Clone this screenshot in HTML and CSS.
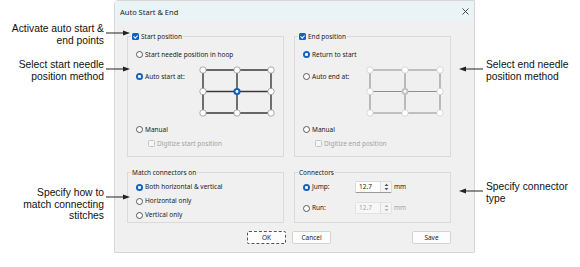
FILE: index.html
```html
<!DOCTYPE html>
<html lang="en">
<head>
    <meta charset="UTF-8">
    <title>Auto Start &amp; End</title>
    <link rel="stylesheet" href="styles.css">
</head>
<body>
<div class="page">

    <!-- Callouts on the left -->
    <div class="notes notes-left">
        <p class="note note-1">Activate auto start &amp;<br>end points<svg class="arrow" width="24" height="6" viewBox="0 0 24 6"><line x1="0" y1="3" x2="19" y2="3"/><polygon points="17,0.5 24,3 17,5.5"/></svg></p>
        <p class="note note-2">Select start needle<br>position method<svg class="arrow" width="24" height="6" viewBox="0 0 24 6"><line x1="0" y1="3" x2="19" y2="3"/><polygon points="17,0.5 24,3 17,5.5"/></svg></p>
        <p class="note note-3">Specify how to<br>match connecting<br>stitches<svg class="arrow" width="24" height="6" viewBox="0 0 24 6"><line x1="0" y1="3" x2="19" y2="3"/><polygon points="17,0.5 24,3 17,5.5"/></svg></p>
    </div>

    <!-- Dialog -->
    <div class="dialog">
        <div class="titlebar">
            <span>Auto Start &amp; End</span>
            <svg class="close" width="7" height="7" viewBox="0 0 7 7"><path d="M0.5 0.5 L6.5 6.5 M6.5 0.5 L0.5 6.5"/></svg>
        </div>
        <div class="body">
            <div class="groups">
                <fieldset class="group group-top">
                    <legend><span class="lg"><span class="check"></span>Start position</span></legend>
                    <div class="opt first"><span class="radio"></span>Start needle position in hoop</div>
                    <div class="opt-grid">
                        <div class="opt grid-label"><span class="radio on"></span>Auto start at:</div>
                        <svg class="pos" width="78" height="51" viewBox="0 0 78 51">
                            <g class="pos-lines">
                                <path d="M4 4 H72 M4 25.5 H72 M4 47 H72 M4 4 V47 M38 4 V47 M72 4 V47"/>
                            </g>
                            <g class="pos-nodes">
                                <circle cx="4" cy="4" r="3.2"/><circle cx="38" cy="4" r="3.2"/><circle cx="72" cy="4" r="3.2"/>
                                <circle cx="4" cy="25.5" r="3.2"/><circle cx="72" cy="25.5" r="3.2"/>
                                <circle cx="4" cy="47" r="3.2"/><circle cx="38" cy="47" r="3.2"/><circle cx="72" cy="47" r="3.2"/>
                            </g>
                            <circle class="pos-sel" cx="38" cy="25.5" r="3.6"/>
                            <circle class="pos-dot" cx="38" cy="25.5" r="1.4"/>
                        </svg>
                    </div>
                    <div class="opt manual"><span class="radio"></span>Manual</div>
                    <div class="opt sub off"><span class="check off"></span>Digitize start position</div>
                </fieldset>

                <fieldset class="group group-top">
                    <legend><span class="lg"><span class="check"></span>End position</span></legend>
                    <div class="opt first"><span class="radio on"></span>Return to start</div>
                    <div class="opt-grid">
                        <div class="opt grid-label"><span class="radio"></span>Auto end at:</div>
                        <svg class="pos pos-off" width="78" height="51" viewBox="0 0 78 51">
                            <g class="pos-lines">
                                <path d="M4 4 H74 M4 25.5 H74 M4 47 H74 M4 4 V47 M39 4 V47 M74 4 V47"/>
                            </g>
                            <g class="pos-nodes">
                                <circle cx="4" cy="4" r="3.2"/><circle cx="39" cy="4" r="3.2"/><circle cx="74" cy="4" r="3.2"/>
                                <circle cx="4" cy="25.5" r="3.2"/><circle cx="74" cy="25.5" r="3.2"/>
                                <circle cx="4" cy="47" r="3.2"/><circle cx="39" cy="47" r="3.2"/><circle cx="74" cy="47" r="3.2"/>
                            </g>
                            <circle class="pos-sel" cx="39" cy="25.5" r="3.4"/>
                            <circle class="pos-dot" cx="39" cy="25.5" r="1.4"/>
                        </svg>
                    </div>
                    <div class="opt manual"><span class="radio"></span>Manual</div>
                    <div class="opt sub off"><span class="check off"></span>Digitize end position</div>
                </fieldset>

                <fieldset class="group group-bottom">
                    <legend><span class="lg">Match connectors on</span></legend>
                    <div class="opt first"><span class="radio on"></span>Both horizontal &amp; vertical</div>
                    <div class="opt"><span class="radio"></span>Horizontal only</div>
                    <div class="opt"><span class="radio"></span>Vertical only</div>
                </fieldset>

                <fieldset class="group group-bottom">
                    <legend><span class="lg">Connectors</span></legend>
                    <div class="opt field first">
                        <span class="field-label"><span class="radio on"></span>Jump:</span>
                        <span class="spin"><span class="spin-val">12.7</span><span class="spin-btn"><svg width="5" height="8" viewBox="0 0 5 8"><path d="M0.5 3 L2.5 0.8 L4.5 3 Z M0.5 5 L2.5 7.2 L4.5 5 Z"/></svg></span></span>
                        <span class="unit">mm</span>
                    </div>
                    <div class="opt field off">
                        <span class="field-label"><span class="radio"></span>Run:</span>
                        <span class="spin"><span class="spin-val">12.7</span><span class="spin-btn"><svg width="5" height="8" viewBox="0 0 5 8"><path d="M0.5 3 L2.5 0.8 L4.5 3 Z M0.5 5 L2.5 7.2 L4.5 5 Z"/></svg></span></span>
                        <span class="unit">mm</span>
                    </div>
                </fieldset>
            </div>

            <!-- Buttons -->
            <div class="buttons">
                <div class="btn-pair">
                    <button class="btn default">OK</button>
                    <button class="btn">Cancel</button>
                </div>
                <button class="btn save">Save</button>
            </div>
        </div>
    </div>

    <!-- Callouts on the right -->
    <div class="notes notes-right">
        <p class="note note-4">Select end needle<br>position method<svg class="arrow" width="24" height="6" viewBox="0 0 24 6"><line x1="5" y1="3" x2="24" y2="3"/><polygon points="7,0.5 0,3 7,5.5"/></svg></p>
        <p class="note note-5">Specify connector<br>type<svg class="arrow" width="24" height="6" viewBox="0 0 24 6"><line x1="5" y1="3" x2="24" y2="3"/><polygon points="7,0.5 0,3 7,5.5"/></svg></p>
    </div>
</div>
</body>
</html>
```

FILE: styles.css
```css
body {
    margin: 0;
    background: #fff;
    font-family: "Noto Sans", sans-serif;
    color: #1b1b1b;
}

.page {
    display: flex;
    align-items: flex-start;
    width: 580px;
    height: 267px;
    overflow: hidden;
}

/* Callouts */
.notes {
    font-family: "Liberation Sans", Arial, sans-serif;
    font-size: 10.3px;
    line-height: 11.5px;
    color: #111;
}

.notes-left {
    width: 114px;
    flex: none;
    box-sizing: border-box;
    padding-right: 10px;
    text-align: right;
}

.notes-right {
    padding-left: 11px;
}

.note {
    position: relative;
    margin: 0;
}

.note .arrow {
    position: absolute;
    top: 7px;
}

.notes-left .arrow {
    left: calc(100% + 2px);
}

.notes-right .arrow {
    right: calc(100% + 3px);
}

.arrow line {
    stroke: #222;
    stroke-width: 1;
}

.arrow polygon {
    fill: #222;
}

.note-1 { margin-top: 23px; }
.note-2 { margin-top: 13px; }
.note-3 { margin-top: 105px; }
.note-4 { margin-top: 59px; }
.note-5 { margin-top: 99px; }

/* Dialog */
.dialog {
    width: 361px;
    height: 253px;
    flex: none;
    box-sizing: border-box;
    background: #f0f0f0;
    border: 1px solid #d6d6d6;
    border-top-left-radius: 4px;
    display: flex;
    flex-direction: column;
    font-size: 6.5px;
}

.titlebar {
    height: 21px;
    flex: none;
    display: flex;
    align-items: center;
    justify-content: space-between;
    padding: 0 5px;
    background: #eaf4f6;
    font-size: 7.5px;
    color: #222;
}

.close path {
    stroke: #333;
    stroke-width: 0.9;
    fill: none;
}

.body {
    flex: 1;
    padding: 10px 23px 0 12px;
    display: flex;
    flex-direction: column;
}

.groups {
    display: grid;
    grid-template-columns: 157px 157px;
    column-gap: 10px;
    row-gap: 11px;
}

/* Group boxes */
.group {
    margin: 0;
    min-width: 0;
    padding: 0 0 7px 8px;
    border: 1px solid #dadada;
}

.group legend {
    margin-left: -5px;
    padding: 0 1px;
    height: 9px;
    line-height: 9px;
}

.lg {
    display: inline-flex;
    align-items: center;
    gap: 2px;
}

.group-bottom {
    padding-bottom: 2px;
}

.opt {
    display: flex;
    align-items: center;
    gap: 2px;
    height: 10px;
    line-height: 10px;
    white-space: nowrap;
}

.group-top .opt.first { margin-top: 8.5px; }
.group-bottom .opt.first { margin-top: 5.5px; }
.group-bottom .opt { margin-top: 4px; }

.opt-grid {
    display: flex;
    align-items: flex-start;
    margin-top: 6px;
}

.grid-label {
    width: 63px;
    margin-top: 6px;
}

.opt.manual { margin-top: 8px; }

.opt.sub {
    margin-top: 4px;
    margin-left: 12px;
}

.off {
    color: #a3a3a3;
}

/* Radio buttons and checkboxes */
.radio {
    width: 7px;
    height: 7px;
    flex: none;
    box-sizing: border-box;
    border-radius: 50%;
    border: 0.8px solid #5a5a5a;
    background: #fff;
}

.radio.on {
    border: none;
    background: radial-gradient(circle, #fff 0 1.3px, #1460bd 1.7px);
}

.check {
    position: relative;
    width: 7px;
    height: 7px;
    flex: none;
    box-sizing: border-box;
    border-radius: 1.5px;
    background: #1460bd;
}

.check::after {
    content: "";
    position: absolute;
    left: 2.3px;
    top: 0.7px;
    width: 1.5px;
    height: 3.4px;
    border: solid #fff;
    border-width: 0 0.9px 0.9px 0;
    transform: rotate(45deg);
}

.check.off {
    background: #f6f6f6;
    border: 0.8px solid #c4c4c4;
}

.check.off::after {
    display: none;
}

/* Needle position grid */
.pos-lines path {
    stroke: #383838;
    stroke-width: 1.4;
    fill: none;
}

.pos-nodes circle {
    fill: #fff;
    stroke: #8a8a8a;
    stroke-width: 0.7;
}

.pos-sel {
    fill: #1460bd;
}

.pos-dot {
    fill: #fff;
}

.pos-off .pos-lines path {
    stroke: #8e8e8e;
    stroke-width: 1.1;
}

.pos-off .pos-nodes circle {
    stroke: #cacaca;
}

.pos-off .pos-sel {
    fill: #c2c2c2;
}

/* Connectors fields */
.opt.field {
    height: 12px;
    gap: 0;
}

.group-bottom .opt.field.first { margin-top: 4.5px; }
.group-bottom .opt.field.off { margin-top: 9px; }

.field-label {
    display: flex;
    align-items: center;
    gap: 2px;
    width: 52px;
    color: #1b1b1b;
}

.spin {
    display: flex;
    height: 12px;
    box-sizing: border-box;
    background: #fff;
    border: 1px solid #dcdcdc;
    border-bottom-color: #9a9a9a;
    border-radius: 1.5px;
}

.spin-val {
    width: 24px;
    padding-left: 3px;
    box-sizing: border-box;
    line-height: 10px;
}

.spin-btn {
    width: 10px;
    display: flex;
    align-items: center;
    justify-content: center;
    background: #f4f4f4;
    border-left: 1px solid #dedede;
}

.spin-btn path {
    fill: #555;
}

.unit {
    margin-left: 2px;
}

.off .spin {
    background: #f7f7f7;
    border-color: #e2e2e2;
}

.off .spin-btn path {
    fill: #b5b5b5;
}

/* Buttons */
.buttons {
    display: grid;
    grid-template-columns: 1fr auto 1fr;
    margin-top: 8px;
}

.btn-pair {
    grid-column: 2;
    display: flex;
    gap: 6px;
}

.btn {
    height: 13px;
    width: 39px;
    padding: 0;
    font-family: "Noto Sans", sans-serif;
    font-size: 6.5px;
    color: #1b1b1b;
    background: #fdfdfd;
    border: 1px solid #d3d3d3;
    border-radius: 2px;
}

.btn.default {
    border: 1px dashed #555;
}

.btn.save {
    justify-self: end;
}
```
